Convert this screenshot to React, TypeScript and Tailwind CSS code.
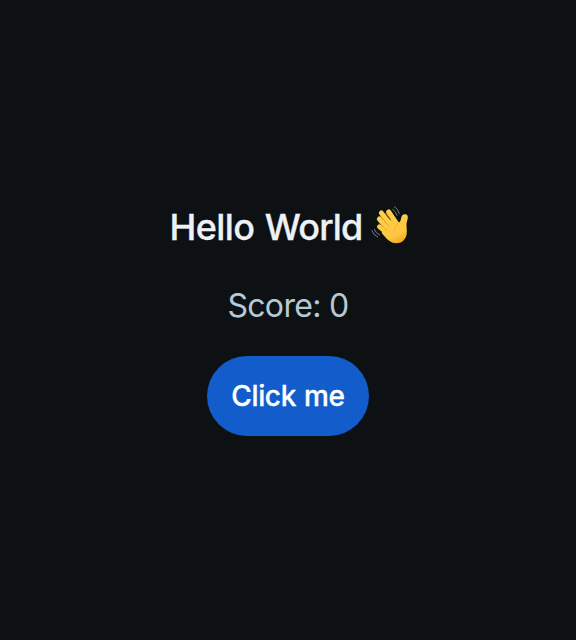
import React, { useState } from "react";

function WavingHand() {
  return (
    <svg className="h-[46px] w-[46px] shrink-0" viewBox="0 0 138 138" fill="none" role="img" aria-label="Waving hand">
      <defs>
        <linearGradient id="skin" x1="50" y1="30" x2="95" y2="125" gradientUnits="userSpaceOnUse">
          <stop offset="0" stopColor="#ffd04a" />
          <stop offset="0.75" stopColor="#ffc63e" />
          <stop offset="1" stopColor="#f2a428" />
        </linearGradient>
      </defs>
      <g stroke="#777c7f" strokeWidth="3" strokeLinecap="round">
        <path d="M77 22Q87 28 90 40" />
        <path d="M82 14Q94 21 97 35" />
        <path d="M22 82Q26 94 38 99" />
        <path d="M15 86Q19 100 32 105" />
      </g>
      <g stroke="url(#skin)" strokeLinecap="round">
        <path d="M65 30L91 68" strokeWidth="15" />
        <path d="M43 33L80 80" strokeWidth="15" />
        <path d="M37 51L72 90" strokeWidth="15" />
        <path d="M37 74L70 101" strokeWidth="14" />
      </g>
      <path d="M57 62L80 48L92 59C96 63 99 61 101 55C103 47 104 38 112 37C121 36 124 43 122 50L119 62C117 73 121 83 119 97C116 114 103 124 89 124C77 124 67 118 59 110L44 93Z" fill="url(#skin)" />
      <g stroke="#dc9420" strokeWidth="2" strokeLinecap="round">
        <path d="M56 34L76 59" />
        <path d="M42 45L66 73" />
        <path d="M37 63L59 84" />
      </g>
      <path d="M96 62Q82 70 82 87" stroke="#f0ab2e" strokeWidth="2" strokeLinecap="round" />
    </svg>
  );
}

export default function App() {
  const [score, setScore] = useState(0);
  return (
    <main className="flex h-[640px] w-full flex-col items-center bg-[#0d1114] pt-[202px] font-['Inter',sans-serif]">
      <h1 className="flex h-[50px] items-center pl-[6px] text-[36px] leading-[50px] font-medium tracking-[-0.8px] text-[#eef2f6]">
        <span className="whitespace-nowrap [word-spacing:1.6px] [-webkit-text-stroke:0.3px_#eef2f6]">
          <span className="tracking-[-0.6px]">Hello</span> World
        </span>
        <span className="ml-[4px] flex h-[50px] items-start"><WavingHand /></span>
      </h1>
      <p className="mt-[30px] h-[48px] text-[32px] leading-[48px] tracking-[-0.68px] text-[#b7c9d3]">Score: {score}</p>
      <button
        className="mt-[26px] h-[80px] w-[162px] rounded-full bg-[#125ccc] text-[28px] font-medium tracking-[-0.35px] text-white [word-spacing:1px] [-webkit-text-stroke:0.3px_white]"
        onClick={() => setScore(score + 1)}
      >
        Click me
      </button>
    </main>
  );
}
